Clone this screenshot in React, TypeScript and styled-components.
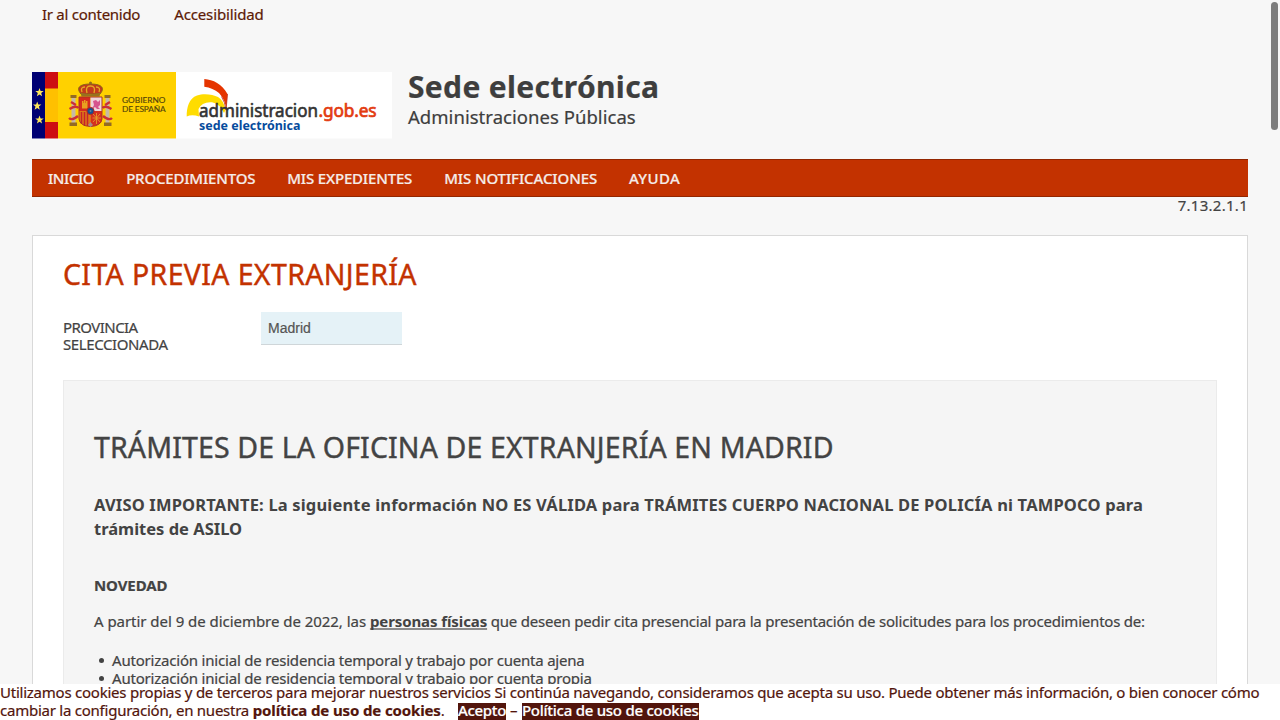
import React from "react";
import styled, { createGlobalStyle } from "styled-components";

const GlobalStyle = createGlobalStyle`
  * { box-sizing: border-box; }
  body { margin: 0; overflow: hidden; background: #f7f7f7; }
`;

const Page = styled.div`
  position: relative;
  height: 720px;
  overflow: hidden;
  background: #f7f7f7;
  color: #434343;
  font: 15px/18px "Noto Sans", "Open Sans", sans-serif;
  -webkit-text-stroke: 0.2px currentColor;
`;

/* Inline run of text with its own tracking */
const Run = styled.span<{ $track: number }>`
  letter-spacing: ${(p) => p.$track}px;
  white-space: pre;
`;

const SkipLinks = styled.nav`
  display: flex;
  height: 72px;
  padding: 5px 0 0 42px;
  gap: 34px;
`;

const SkipLink = styled.a`
  color: #5c1a06;
  width: max-content;
  white-space: nowrap;
`;

const Wrap = styled.div`
  padding: 0 32px;
`;

const Header = styled.header`
  display: flex;
  gap: 16px;
  height: 87px;
`;

const Logo = styled.svg`
  display: block;
  width: 360px;
  height: 67px;
  -webkit-text-stroke: 0;
`;

const SiteName = styled.div`
  color: #3e3e3e;
`;

const SiteTitle = styled.div`
  font-size: 30px;
  font-weight: 700;
  line-height: 30px;
`;

const SiteSub = styled.div`
  font-size: 18.5px;
  line-height: 30px;
`;

const Menu = styled.nav`
  display: flex;
  gap: 32px;
  height: 38px;
  padding: 0 16px;
  background: #c33200;
  border: solid #932600;
  border-width: 1px 0;
  line-height: 37px;
`;

const MenuItem = styled.a`
  color: #f5ece8;
  font-weight: 500;
`;

const Version = styled.div`
  height: 38px;
  line-height: 17px;
  text-align: right;
`;

const Panel = styled.main`
  height: 900px;
  padding: 0 30px;
  background: #fff;
  border: 1px solid #d9d9d9;
`;

const Title = styled.h1`
  margin: 0;
  padding-top: 20px;
  height: 76px;
  color: #c33200;
  font-size: 28.5px;
  font-weight: 400;
  line-height: 36px;
  -webkit-text-stroke-width: 0.4px;
`;

const Field = styled.div`
  display: flex;
  height: 68px;
`;

const Label = styled.label`
  width: 198px;
  padding-top: 7px;
  line-height: 17px;
`;

const Value = styled.div`
  width: 141px;
  height: 33px;
  padding-left: 7px;
  background: #e5f2f7;
  border-bottom: 1px solid #cfd6d9;
  color: #555;
  font: 14px/32px "Liberation Sans", Arial, sans-serif;
`;

const Notice = styled.section`
  height: 700px;
  padding: 48px 30px 0;
  background: #f5f5f5;
  border: 1px solid #ebebeb;
`;

const NoticeTitle = styled.h2`
  margin: 0 0 28px;
  font-size: 28.5px;
  font-weight: 400;
  line-height: 36px;
  -webkit-text-stroke-width: 0.4px;
`;

const Warning = styled.p`
  margin: 0 0 35px;
  font-size: 16.5px;
  font-weight: 700;
  line-height: 24px;
  -webkit-text-stroke-width: 0;
`;

const Paragraph = styled.p<{ $bold?: boolean }>`
  margin: 0 0 18px;
  font-weight: ${(p) => (p.$bold ? 700 : 400)};
`;

const Emphasis = styled.b`
  text-decoration: underline;
  text-decoration-color: #8c8c8c;
  text-decoration-thickness: 2px;
  text-decoration-skip-ink: none;
  text-underline-offset: 1px;
  -webkit-text-stroke-width: 0;
`;

const List = styled.ul`
  margin: 21px 0 0;
  padding: 0;
  list-style: none;
`;

const Item = styled.li`
  display: flex;
  align-items: center;
  padding-left: 5px;
  &::before {
    content: "";
    width: 5px;
    height: 5px;
    margin-right: 8px;
    border-radius: 50%;
    background: #434343;
  }
`;

const CookieBar = styled.div`
  position: absolute;
  inset: auto 0 0 0;
  height: 36px;
  background: #fff;
  color: #52150c;
  line-height: 17px;
`;

const CookieLine = styled.div`
  display: flex;
  height: 18px;
  white-space: pre;
`;

const CookieButton = styled.a`
  height: 17px;
  margin-top: 1px;
  line-height: 15px;
  background: #52150c;
  color: #fff;
  font-weight: 500;
`;

const ScrollThumb = styled.div`
  position: absolute;
  top: 2px;
  right: 2px;
  width: 7px;
  height: 128px;
  border-radius: 4px;
  background: #7d7d7d;
`;

const star = "0,-4.4 1.1,-1.4 4.2,-1.4 1.7,0.6 2.6,3.7 0,1.9 -2.6,3.7 -1.7,0.6 -4.2,-1.4 -1.1,-1.4";

function GovernmentLogo() {
  return (
    <Logo viewBox="0 0 360 67" fontFamily="Lato, sans-serif">
      <rect width="360" height="66.500" fill="#fff" />
      <rect width="13" height="66.500" fill="#000073" />
      <rect x="13" width="13" height="66.500" fill="#cd0d12" />
      <rect x="13" y="16.500" width="13" height="33.500" fill="#ffc000" />
      <rect x="26" width="118" height="66.500" fill="#ffd100" />
      <g fill="#ffe75a">
        <polygon points={star} transform="translate(7.500 20.500)" />
        <polygon points={star} transform="translate(5.200 34)" />
        <polygon points={star} transform="translate(7.500 47.800)" />
      </g>

      {/* Coat of arms: crown */}
      <path d="M49 22C43 15 49 12 58.500 12S74 15 68 22Z" fill="#c33a1c" stroke="#866318" strokeWidth="1" />
      <path d="M50 20Q48 15 53 15M55 21Q53 14 58.500 14Q64 14 62 21M67 20Q69 15 64 15" fill="none" stroke="#e6aa23" strokeWidth="1.300" />
      <path d="M48.500 20.500Q58.500 24 68.500 20.500L67.500 24.500H49.500Z" fill="#97711f" />
      <circle cx="58.500" cy="11" r="1.500" fill="#8d6a1e" />
      {/* Columns and ribbons */}
      <g>
        <rect x="39.500" y="26" width="4" height="25" fill="#c7b9a5" />
        <rect x="73.500" y="26" width="4" height="25" fill="#c7b9a5" />
        <path d="M38.500 23H44.500V26H38.500ZM72.500 23H78.500V26H72.500ZM37.500 50.500H45V54H37.500ZM72 50.500H79.500V54H72Z" fill="#946b22" />
        <path d="M37.500 37Q44 33 46.500 36M37 46Q40 49 46 44M79.500 37Q73 33 70.500 36M80 46Q77 49 71 44M39 30L44 33M78 30L73 33" fill="none" stroke="#cb3036" strokeWidth="2.400" />
      </g>
      {/* Shield quarters */}
      <path d="M47 25H58.500V39H47Z" fill="#d52b1e" />
      <path d="M58.500 25H70V39H58.500Z" fill="#efd4d8" />
      <path d="M47 39H58.500V54.500Q47 54 47 47Z" fill="#dc7a18" />
      <path d="M58.500 39H70V47Q70 54 58.500 54.500Z" fill="#d6301e" />
      <path d="M50 36.500V29H51.500V31H52V28H53.500V31H54V29H55.500V36.500Z" fill="#e8a020" />
      <path d="M61 29L64 28L66 30L68 28V33L66 35L68 37H65L63 35L60 37L62 33Z" fill="#d7558e" />
      <path d="M49.500 40V52M52.500 40V54M55.500 40V54" stroke="#c8232a" strokeWidth="1.500" />
      <path d="M61 42L68 50M68 42L61 50M60.500 46H69M64.500 41V52" stroke="#e49a28" strokeWidth=".9" />
      <path d="M47 25H70V47Q69 54 58.500 54.500Q48 54 47 47Z" fill="none" stroke="#a93424" strokeWidth="1" />
      <circle cx="58.500" cy="39" r="3.600" fill="#174f91" stroke="#b5231e" />
      <circle cx="58.500" cy="39" r="1" fill="#5684a0" />
      <path d="M56 53L58.500 50L61 53L58.500 55Z" fill="#a68b87" />

      <g fill="#52440b" stroke="#52440b" strokeWidth=".15" fontSize="8.300">
        <text x="90" y="31.300" textLength="43.500">GOBIERNO</text>
        <text x="90" y="40" textLength="43.500">DE ESPAÑA</text>
      </g>

      {/* Administration portal mark */}
      <path d="M154.700 44.500C154.500 36 157 26 165 23.500C172 21 181 22.500 186 25Q191.500 28 193.500 38L192 41Q188 32 180 30.300Q170 29.500 166.500 37L167 44.500Q160 42 154.700 44.500Z" fill="#ffdc00" />
      <path d="M172.300 7C181 7.500 190 12 195.500 22L194.300 38Q193.500 28 187 21Q181 16 172.300 14.800Z" fill="#e53400" />
      <path d="M189.500 24.500Q193 30 194 38L195.500 22" fill="none" stroke="#ba3322" strokeWidth=".8" />
      <g fontFamily="Noto Sans, sans-serif" fontSize="17.300">
        <text x="167" y="44.500" textLength="119" lengthAdjust="spacingAndGlyphs" fill="#333" stroke="#333" strokeWidth=".6">administracion</text>
        <text x="286.500" y="44.500" textLength="58" fill="#e33b10" stroke="#e33b10" strokeWidth=".7">.gob.es</text>
      </g>
      <text x="167" y="58" textLength="101.500" lengthAdjust="spacingAndGlyphs" fill="#064b9d" fontFamily="Noto Sans, sans-serif" fontWeight="700" fontSize="13">sede electrónica</text>
    </Logo>
  );
}

const menu: [string, number][] = [
  ["INICIO", -0.45],
  ["PROCEDIMIENTOS", -0.19],
  ["MIS EXPEDIENTES", -0.18],
  ["MIS NOTIFICACIONES", -0.12],
  ["AYUDA", 0.4],
];

export default function App() {
  return (
    <Page>
      <GlobalStyle />
      <SkipLinks>
        <SkipLink><Run $track={-0.27}>Ir al contenido</Run></SkipLink>
        <SkipLink><Run $track={-0.13}>Accesibilidad</Run></SkipLink>
      </SkipLinks>
      <Wrap>
        <Header>
          <GovernmentLogo />
          <SiteName>
            <SiteTitle><Run $track={0.34}>Sede electrónica</Run></SiteTitle>
            <SiteSub><Run $track={0.04}>Administraciones Públicas</Run></SiteSub>
          </SiteName>
        </Header>
        <Menu>
          {menu.map(([label, track]) => (
            <MenuItem key={label}><Run $track={track}>{label}</Run></MenuItem>
          ))}
        </Menu>
        <Version><Run $track={0.28}>7.13.2.1.1</Run></Version>
        <Panel>
          <Title><Run $track={0.36}>CITA PREVIA EXTRANJERÍA</Run></Title>
          <Field>
            <Label><Run $track={-0.55}>PROVINCIA</Run><br /><Run $track={-0.4}>SELECCIONADA</Run></Label>
            <Value>Madrid</Value>
          </Field>
          <Notice>
            <NoticeTitle><Run $track={0.14}>TRÁMITES DE LA OFICINA DE EXTRANJERÍA EN MADRID</Run></NoticeTitle>
            <Warning>
              <Run $track={0.17}>AVISO IMPORTANTE: La siguiente información NO ES VÁLIDA para TRÁMITES CUERPO NACIONAL DE POLICÍA ni TAMPOCO para</Run><br />
              <Run $track={0}>trámites de ASILO</Run>
            </Warning>
            <Paragraph $bold><Run $track={-0.1}>NOVEDAD</Run></Paragraph>
            <Paragraph>
              <Run $track={-0.04}>A partir del 9 de diciembre de 2022, las </Run>
              <Emphasis><Run $track={-0.1}>personas físicas</Run></Emphasis>
              <Run $track={-0.215}> que deseen pedir cita presencial para la presentación de solicitudes para los procedimientos de:</Run>
            </Paragraph>
            <List>
              <Item><Run $track={-0.2}>Autorización inicial de residencia temporal y trabajo por cuenta ajena</Run></Item>
              <Item><Run $track={-0.2}>Autorización inicial de residencia temporal y trabajo por cuenta propia</Run></Item>
            </List>
          </Notice>
        </Panel>
      </Wrap>
      <CookieBar>
        <CookieLine>
          <Run $track={-0.237}>Utilizamos cookies propias y de terceros para mejorar nuestros servicios Si continúa navegando, consideramos que acepta su uso. Puede obtener más información, o bien conocer cómo</Run>
        </CookieLine>
        <CookieLine>
          <Run $track={-0.24}>cambiar la configuración, en nuestra </Run>
          <b><Run $track={-0.13}>política de uso de cookies</Run></b>
          <Run $track={0.4}>.   </Run>
          <CookieButton><Run $track={-0.35}>Acepto</Run></CookieButton>
          <Run $track={0.2}> – </Run>
          <CookieButton><Run $track={-0.26}>Política de uso de cookies</Run></CookieButton>
        </CookieLine>
      </CookieBar>
      <ScrollThumb />
    </Page>
  );
}
